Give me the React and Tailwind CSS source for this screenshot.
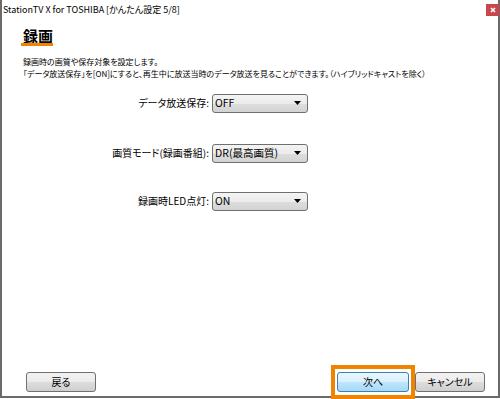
import React from "react";

const jp = "font-['Noto_Sans_CJK_JP','Noto_Sans',sans-serif] [font-feature-settings:'palt']";

function Select({ value }) {
  return (
    <div className="flex h-[19px] w-[96px] items-center justify-between rounded-[3px] border border-[#707070] bg-[linear-gradient(to_bottom,#f4f4f4_0%,#ebebeb_50%,#dddddd_51%,#d3d3d3_100%)] pl-[2px] pr-[6px]">
      <span className="text-[10.5px] leading-none text-black">{value}</span>
      <svg width="7" height="4" viewBox="0 0 7 4">
        <path d="M0 0H7L3.5 4Z" fill="#000" />
      </svg>
    </div>
  );
}

function Row({ label, value, mt }) {
  return (
    <div className={`flex items-center ${mt}`}>
      <div className="w-[208px] pr-[1px] text-right text-[10px] leading-none text-black">{label}</div>
      <div className="ml-[2px]">
        <Select value={value} />
      </div>
    </div>
  );
}

function Button({ children, blue }) {
  return (
    <div
      className={
        blue
          ? "flex h-[20px] w-[72px] items-center justify-center rounded-[3px] border border-[#3c7fb1] bg-[linear-gradient(to_bottom,#eaf6fd_0%,#d9f0fc_50%,#bee6fd_51%,#a7d9f5_100%)] text-[10px] leading-none text-black"
          : "flex h-[20px] w-[70px] items-center justify-center rounded-[3px] border border-[#707070] bg-[linear-gradient(to_bottom,#f2f2f2_0%,#ebebeb_50%,#dddddd_51%,#cfcfcf_100%)] text-[10px] leading-none text-black"
      }
    >
      {children}
    </div>
  );
}

export default function App() {
  return (
    <div className={`h-[399px] w-[500px] bg-white ${jp}`}>
      <div className="flex h-[398px] w-[500px] flex-col border-x-2 border-b-2 border-[#6a6a6a] bg-white">
        <div className="flex h-[20px] items-start justify-between">
          <div className="ml-[1px] mt-[3px] text-[9px] leading-[14px] text-black">
            StationTV X for TOSHIBA [かんたん設定 5/8]
          </div>
          <div className="mr-[-1px] mt-[4px] flex h-[12px] w-[13px] items-center justify-center bg-[#c9474a]">
            <svg width="6" height="6" viewBox="0 0 6 6">
              <path d="M1 1L5 5M5 1L1 5" stroke="#fff" strokeWidth="1.6" />
            </svg>
          </div>
        </div>

        <div className="ml-[19px] mt-[8px] flex flex-col items-start">
          <div className="pl-[2px] text-[15px] font-bold leading-[15px] text-black">録画</div>
          <div className="mt-[0px] h-[2.5px] w-[32px] bg-[#f08300]" />
        </div>

        <div className="ml-[21px] mt-[10px] text-[8px] leading-[12.5px] text-black">
          <div>録画時の画質や保存対象を設定します。</div>
          <div>「データ放送保存」を[ON]にすると、再生中に放送当時のデータ放送を見ることができます。（ハイブリッドキャストを除く）</div>
        </div>

        <Row label="データ放送保存:" value="OFF" mt="mt-[13px]" />
        <Row label="画質モード(録画番組):" value="DR(最高画質)" mt="mt-[31px]" />
        <Row label="録画時LED点灯:" value="ON" mt="mt-[29px]" />

        <div className="mt-auto flex items-center justify-between pb-[4px] pl-[24px] pr-[13px]">
          <Button>戻る</Button>
          <div className="flex items-center gap-[6px]">
            <div className="relative">
              <Button blue>次へ</Button>
              <div className="absolute -bottom-[7px] -left-[6px] -right-[6px] -top-[7px] border-4 border-[#f08300]" />
            </div>
            <Button>キャンセル</Button>
          </div>
        </div>
      </div>
    </div>
  );
}
